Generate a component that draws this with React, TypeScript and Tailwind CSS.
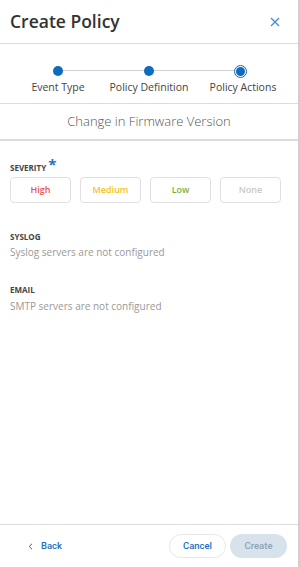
import React from "react";

const steps = ["Event Type", "Policy Definition", "Policy Actions"];

export default function App() {
  return (
    <div className="flex h-[567px] w-[300px] bg-white" style={{ fontFamily: '"Open Sans", sans-serif' }}>
      <div className="flex h-full w-[298px] flex-col">
        {/* Header */}
        <div className="flex h-[44px] items-center justify-between border-b border-[#dcdcdc] pl-[10px] pr-[18px]">
          <h1 className="text-[17.5px] font-semibold text-[#333]">Create Policy</h1>
          <svg width="10" height="10" viewBox="0 0 10 10" className="mt-[1px]">
            <path d="M1 1 L9 9 M9 1 L1 9" stroke="#3d8de0" strokeWidth="1.3" />
          </svg>
        </div>

        {/* Stepper */}
        <div className="flex h-[60px] flex-col justify-start border-b border-[#dcdcdc] pt-[21px]">
          <div className="relative mx-auto grid w-[273px] grid-cols-3">
            <div className="absolute left-[45px] right-[45px] top-[5px] h-px bg-[#d0d0d0]" />
            {steps.map((s, i) => (
              <div key={s} className="relative flex flex-col items-center">
                <div className="flex h-[12px] items-center justify-center">
                  {i === 2 ? (
                    <div className="flex h-[13px] w-[13px] items-center justify-center rounded-full border border-[#0b6cc0] bg-white">
                      <div className="h-[9px] w-[9px] rounded-full bg-[#0b6cc0]" />
                    </div>
                  ) : (
                    <div className="h-[10px] w-[10px] rounded-full bg-[#0b6cc0]" />
                  )}
                </div>
                <div className={`mt-[3px] text-[10.5px] leading-[14px] text-[#444] ${i === 2 ? "translate-x-[3px]" : ""}`}>{s}</div>
              </div>
            ))}
          </div>
        </div>

        {/* Title */}
        <div className="flex h-[37px] items-center justify-center border-b-2 border-[#dcdcdc]">
          <span className="text-[13px] font-light text-[#555]">Change in Firmware Version</span>
        </div>

        {/* Content */}
        <div className="flex flex-1 flex-col px-[10px] pt-[18px]">
          <div className="flex items-start">
            <span className="mt-[4px] text-[8px] font-bold leading-[10px] text-[#444]">SEVERITY</span>
            <span className="ml-[2px] text-[15px] font-bold leading-[10px] text-[#1a73c8]">*</span>
          </div>
          <div className="mt-[4px] grid w-[271px] grid-cols-4 gap-[9px]">
            {[
              ["High", "text-[#e8505b]"],
              ["Medium", "text-[#f4c223]"],
              ["Low", "text-[#7fae3a]"],
              ["None", "text-[#c8c8c8]"],
            ].map(([t, c]) => (
              <div
                key={t}
                className={`flex h-[26px] items-center justify-center rounded-[4px] border border-[#e0e0e0] text-[9px] font-semibold ${c}`}
              >
                {t}
              </div>
            ))}
          </div>

          <div className="mt-[29px] text-[8px] font-bold leading-[10px] text-[#444]">SYSLOG</div>
          <div className="mt-[3px] text-[10px] leading-[14px] text-[#999]">Syslog servers are not configured</div>

          <div className="mt-[26px] text-[8px] font-bold leading-[10px] text-[#444]">EMAIL</div>
          <div className="mt-[4px] text-[10px] leading-[14px] text-[#999]">SMTP servers are not configured</div>
        </div>

        {/* Footer */}
        <div
          className="flex h-[43px] items-center justify-between border-t border-[#dcdcdc] pl-[28px] pr-[11px]"
          style={{ fontFamily: 'Roboto, "Liberation Sans", sans-serif' }}
        >
          <div className="flex items-center gap-[8px] text-[9.5px] font-medium text-[#1a6fc4]">
            <svg width="5" height="7" viewBox="0 0 5 7">
              <path d="M4 0.8 L1.2 3.5 L4 6.2" fill="none" stroke="#1a6fc4" strokeWidth="1" />
            </svg>
            <span>Back</span>
          </div>
          <div className="flex items-center gap-[4px]">
            <div className="flex h-[24px] w-[57px] items-center justify-center rounded-full border border-[#e8e8e8] bg-white text-[9.5px] font-medium text-[#1a6fc4]">
              Cancel
            </div>
            <div className="flex h-[24px] w-[57px] items-center justify-center rounded-full bg-[#d7e2ec] text-[9.5px] font-medium text-[#8ea2b6]">
              Create
            </div>
          </div>
        </div>
      </div>
      <div className="h-full w-[2px] bg-[#cfcfcf]" />
    </div>
  );
}
